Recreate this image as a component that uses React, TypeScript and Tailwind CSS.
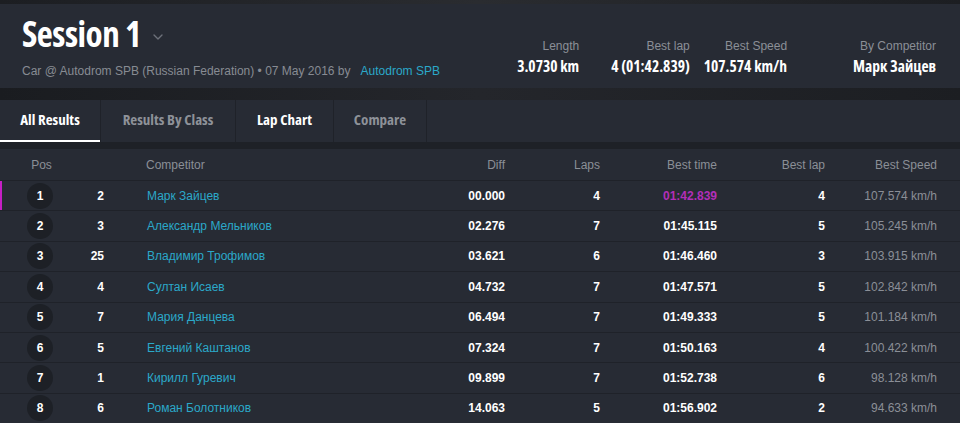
import { ChevronDown } from 'lucide-react';

type Row = {
  pos: number;
  num: number;
  name: string;
  diff: string;
  laps: number;
  best: string;
  bestLap: number;
  speed: string;
};

const rows: Row[] = [
  { pos: 1, num: 2, name: 'Марк Зайцев', diff: '00.000', laps: 4, best: '01:42.839', bestLap: 4, speed: '107.574 km/h' },
  { pos: 2, num: 3, name: 'Александр Мельников', diff: '02.276', laps: 7, best: '01:45.115', bestLap: 5, speed: '105.245 km/h' },
  { pos: 3, num: 25, name: 'Владимир Трофимов', diff: '03.621', laps: 6, best: '01:46.460', bestLap: 3, speed: '103.915 km/h' },
  { pos: 4, num: 4, name: 'Султан Исаев', diff: '04.732', laps: 7, best: '01:47.571', bestLap: 5, speed: '102.842 km/h' },
  { pos: 5, num: 7, name: 'Мария Данцева', diff: '06.494', laps: 7, best: '01:49.333', bestLap: 5, speed: '101.184 km/h' },
  { pos: 6, num: 5, name: 'Евгений Каштанов', diff: '07.324', laps: 7, best: '01:50.163', bestLap: 4, speed: '100.422 km/h' },
  { pos: 7, num: 1, name: 'Кирилл Гуревич', diff: '09.899', laps: 7, best: '01:52.738', bestLap: 6, speed: '98.128 km/h' },
  { pos: 8, num: 6, name: 'Роман Болотников', diff: '14.063', laps: 5, best: '01:56.902', bestLap: 2, speed: '94.633 km/h' },
];

const cols = 'grid grid-cols-[80px_24px_341px_60px_95px_117px_108px_112px]';

function Stat({ label, value, className }: { label: string; value: string; className?: string }) {
  return (
    <div className={`flex flex-col items-end ${className ?? ''}`}>
      <span className="text-[12px] text-[#8b8f97] leading-4">{label}</span>
      <span className="font-['Open_Sans'] font-bold font-stretch-condensed text-[15.5px] text-white leading-5 mt-[2px]">
        {value}
      </span>
    </div>
  );
}

export default function App() {
  const tabs = [
    { label: 'All Results', w: 'w-[101px]', active: true, color: 'text-white' },
    { label: 'Results By Class', w: 'w-[135px]', color: 'text-[#8e9299]' },
    { label: 'Lap Chart', w: 'w-[98px]', color: 'text-white' },
    { label: 'Compare', w: 'w-[93px]', color: 'text-[#8e9299]' },
  ];

  return (
    <div className="w-[960px] h-[423px] overflow-hidden bg-[#1d2026] font-['Liberation_Sans',Arial,sans-serif]">
      {/* Header */}
      <div className="h-[4px] bg-gradient-to-r from-[#1c1e22] via-[#2a2c30] to-[#1c1e22]" />
      <div className="h-[84px] bg-[#272b34] flex justify-between px-[22px]">
        <div className="pt-[10px]">
          <div className="flex items-center">
            <h1 className="font-['Open_Sans'] font-bold font-stretch-condensed text-[35px] leading-[40px] text-white tracking-[-0.5px]">
              Session 1
            </h1>
            <ChevronDown className="w-[16px] h-[16px] text-[#6d717a] ml-[9px] mt-[6px]" strokeWidth={2} />
          </div>
          <p className="text-[12px] text-[#878b93] mt-[9px] leading-4">
            Car @ Autodrom SPB (Russian Federation) • 07 May 2016 by
            <span className="text-[#2ba8c9] ml-[10px]">Autodrom SPB</span>
          </p>
        </div>
        <div className="flex pt-[34px] pr-[2px]">
          <Stat label="Length" value="3.0730 km" />
          <Stat label="Best lap" value="4 (01:42.839)" className="ml-[32px]" />
          <Stat label="Best Speed" value="107.574 km/h" className="ml-[14px]" />
          <Stat label="By Competitor" value="Марк Зайцев" className="ml-[66px]" />
        </div>
      </div>
      <div className="h-[12px] bg-gradient-to-r from-[#1a1c20] via-[#24262b] to-[#1c1e22]" />

      {/* Tabs */}
      <div className="h-[42px] bg-[#272b34] flex">
        {tabs.map((t) => (
          <div
            key={t.label}
            className={`${t.w} relative flex items-center justify-center pb-[4px] border-r border-[#1f2229] font-['Open_Sans'] font-bold font-stretch-condensed text-[15px] ${t.color}`}
          >
            {t.label}
            {t.active && <div className="absolute left-0 right-0 bottom-0 h-[2px] bg-white" />}
          </div>
        ))}
      </div>
      <div className="h-[7px] bg-[#1e2127]" />

      {/* Table */}
      <div className="bg-[#272b34] text-[12px]">
        <div className={`${cols} h-[32px] items-center text-[#8b8f97] border-b border-[#1f2229]`}>
          <span className="text-center pl-[3px]">Pos</span>
          <span />
          <span className="pl-[42px]">Competitor</span>
          <span className="text-right">Diff</span>
          <span className="text-right">Laps</span>
          <span className="text-right">Best time</span>
          <span className="text-right">Best lap</span>
          <span className="text-right">Best Speed</span>
        </div>
        {rows.map((r) => (
          <div
            key={r.pos}
            className={`${cols} h-[30.4px] items-center border-b border-[#1f2229] relative`}
          >
            {r.pos === 1 && <div className="absolute left-0 top-0 bottom-0 w-[2px] bg-[#c51fc5]" />}
            <div className="flex justify-center">
              <span className="w-[26px] h-[26px] rounded-full bg-[#1d2026] flex items-center justify-center text-white font-bold">
                {r.pos}
              </span>
            </div>
            <span className="text-right text-white font-bold">{r.num}</span>
            <span className="pl-[43px] text-[#2ba8c9]">{r.name}</span>
            <span className="text-right text-white font-bold">{r.diff}</span>
            <span className="text-right text-white font-bold">{r.laps}</span>
            <span className={`text-right font-bold ${r.pos === 1 ? 'text-[#b22fb8]' : 'text-white'}`}>{r.best}</span>
            <span className="text-right text-white font-bold">{r.bestLap}</span>
            <span className="text-right text-[#8b8f97]">{r.speed}</span>
          </div>
        ))}
      </div>
    </div>
  );
}
